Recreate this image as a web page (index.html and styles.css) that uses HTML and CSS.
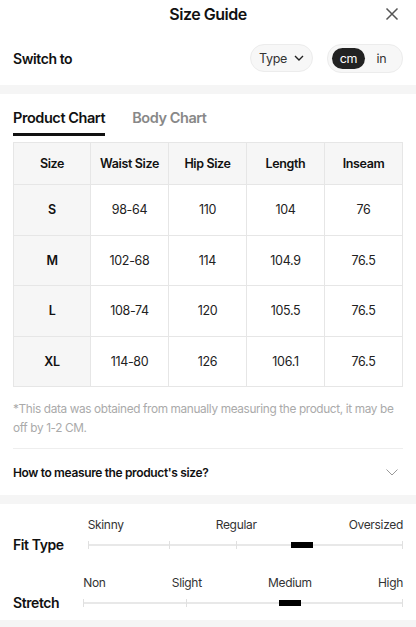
FILE: index.html
```html
<html>
   <head>
      <title>Size Guide</title>
      <link rel="stylesheet" href="styles.css">
   </head>
   <body>
      <div id="header">
         <div id="title">Size Guide</div>
         <button id="closeBtn">
            <svg width="14" height="14" viewBox="0 0 14 14">
               <path d="M1.5 1.5 L12.5 12.5 M12.5 1.5 L1.5 12.5" stroke="#555" stroke-width="1.5" fill="none" />
            </svg>
         </button>
      </div>

      <div id="switchRow">
         <b>Switch to</b>
         <div class="spacer"></div>
         <div class="pill typePill">
            Type
            <svg width="10" height="6" viewBox="0 0 10 6">
               <path d="M1 1 L5 5 L9 1" stroke="#222" stroke-width="1.4" fill="none" />
            </svg>
         </div>
         <div class="pill unitPill">
            <span class="unit active">cm</span>
            <span class="unit">in</span>
         </div>
      </div>

      <div class="band"></div>

      <div class="section">
         <div id="tabs">
            <div class="tab active">Product Chart</div>
            <div class="tab">Body Chart</div>
         </div>

         <table id="chart">
            <tr>
               <th>Size</th>
               <th>Waist Size</th>
               <th>Hip Size</th>
               <th>Length</th>
               <th>Inseam</th>
            </tr>
            <tr><th>S</th><td>98-64</td><td>110</td><td>104</td><td>76</td></tr>
            <tr><th>M</th><td>102-68</td><td>114</td><td>104.9</td><td>76.5</td></tr>
            <tr><th>L</th><td>108-74</td><td>120</td><td>105.5</td><td>76.5</td></tr>
            <tr><th>XL</th><td>114-80</td><td>126</td><td>106.1</td><td>76.5</td></tr>
         </table>

         <p id="note">*This data was obtained from manually measuring the product, it may be off by 1-2 CM.</p>

         <div id="howTo">
            <b>How to measure the product's size?</b>
            <svg width="12" height="7" viewBox="0 0 12 7">
               <path d="M0.5 0.5 L6 6 L11.5 0.5" stroke="#999" stroke-width="1" fill="none" />
            </svg>
         </div>
      </div>

      <div class="band"></div>

      <div class="section fit">
         <div class="fitRow">
            <div></div>
            <div class="scaleLabels">
               <span>Skinny</span><span>Regular</span><span>Oversized</span>
            </div>
            <b class="fitLabel">Fit Type</b>
            <div class="track">
               <i class="tick" style="left: 0%"></i>
               <i class="tick" style="left: 25.8%"></i>
               <i class="tick" style="left: 47.1%"></i>
               <i class="tick" style="left: 99.7%"></i>
               <i class="marker" style="left: 64.6%"></i>
            </div>
         </div>
         <div class="fitRow">
            <div></div>
            <div class="scaleLabels">
               <span>Non</span><span>Slight</span><span>Medium</span><span>High</span>
            </div>
            <b class="fitLabel">Stretch</b>
            <div class="track">
               <i class="tick" style="left: 0%"></i>
               <i class="tick" style="left: 32.2%"></i>
               <i class="tick" style="left: 99.7%"></i>
               <i class="marker" style="left: 61.2%"></i>
            </div>
         </div>
      </div>

      <div class="band"></div>
   </body>
</html>
```

FILE: styles.css
```css
html {
   margin: 0px;
   padding: 0px;
}

body {
   font-family: "Inter", "Liberation Sans", Arial, sans-serif;
   margin: 0px;
   background-color: white;
   color: #111;
   letter-spacing: -0.02em;
}

b {
   font-weight: 600;
   letter-spacing: -0.03em;
}

#header {
   height: 31px;
   display: flex;
   align-items: center;
   justify-content: center;
   position: relative;
}

#title {
   font-size: 16px;
   font-weight: 600;
   letter-spacing: -0.03em;
   margin-bottom: 3px;
}

#closeBtn {
   position: absolute;
   right: 17px;
   top: 7px;
   border: none;
   background: none;
   padding: 0px;
   width: 14px;
   height: 14px;
}

#switchRow {
   display: flex;
   align-items: center;
   height: 54px;
   padding: 0px 13px;
   font-size: 14px;
}

.spacer {
   flex: 1;
}

.pill {
   display: flex;
   align-items: center;
   height: 28px;
   border-radius: 14px;
   background-color: #f7f7f7;
   border: 1px solid #ececec;
   box-sizing: border-box;
}

.typePill {
   width: 63px;
   justify-content: center;
   gap: 7px;
   font-size: 12.5px;
   color: #333;
   margin-right: 14px;
}

.unitPill {
   width: 76px;
   padding: 0px 4px;
   height: 29px;
}

.unit {
   width: 34px;
   height: 21px;
   border-radius: 11px;
   display: flex;
   align-items: center;
   justify-content: center;
   font-size: 12.5px;
   color: #333;
}

.unit.active {
   background-color: #222;
   color: white;
}

.band {
   height: 9px;
   background-color: #f5f5f5;
}

.section {
   padding: 0px 13px;
}

#tabs {
   display: flex;
   gap: 27px;
   padding-top: 15px;
   height: 24px;
}

.tab {
   font-size: 14.5px;
   font-weight: 600;
   letter-spacing: -0.03em;
   color: #888;
   height: 24px;
}

.tab.active {
   color: #111;
   border-bottom: 3px solid #111;
}

#chart {
   width: 100%;
   margin-top: 9px;
   border-collapse: collapse;
   table-layout: fixed;
   font-size: 12.5px;
}

#chart th,
#chart td {
   border: 1px solid #e6e6e6;
   text-align: center;
   height: 50.5px;
   padding: 0px;
}

#chart tr:first-child th {
   height: 42px;
}

#chart th {
   font-weight: 600;
   letter-spacing: -0.03em;
   background-color: #f6f6f6;
}

#chart td {
   color: #222;
}

#chart th:first-child {
   width: 76px;
}

#note {
   margin: 13px 0px 0px 0px;
   font-size: 11.8px;
   letter-spacing: -0.03em;
   line-height: 19px;
   color: #aaa;
   padding-bottom: 10px;
   border-bottom: 1px solid #eee;
}

#howTo {
   display: flex;
   align-items: center;
   justify-content: space-between;
   height: 46px;
   font-size: 12px;
   padding-right: 5px;
}

.fit {
   padding-top: 13px;
   padding-bottom: 8px;
}

.fitRow {
   display: grid;
   grid-template-columns: auto 1fr;
   column-gap: 24px;
   row-gap: 3px;
   align-items: center;
   margin-bottom: 21px;
}

.fitRow:last-child {
   margin-bottom: 0px;
}

.fitLabel {
   font-size: 14px;
   line-height: 18px;
}

.scaleLabels {
   display: flex;
   justify-content: space-between;
   font-size: 12px;
   color: #333;
   line-height: 16px;
}

.track {
   position: relative;
   height: 2px;
   background-color: #e8e8e8;
}

.tick {
   position: absolute;
   top: -3px;
   width: 1px;
   height: 8px;
   background-color: #e0e0e0;
}

.marker {
   position: absolute;
   top: -2px;
   width: 22px;
   height: 6px;
   background-color: black;
}
```
